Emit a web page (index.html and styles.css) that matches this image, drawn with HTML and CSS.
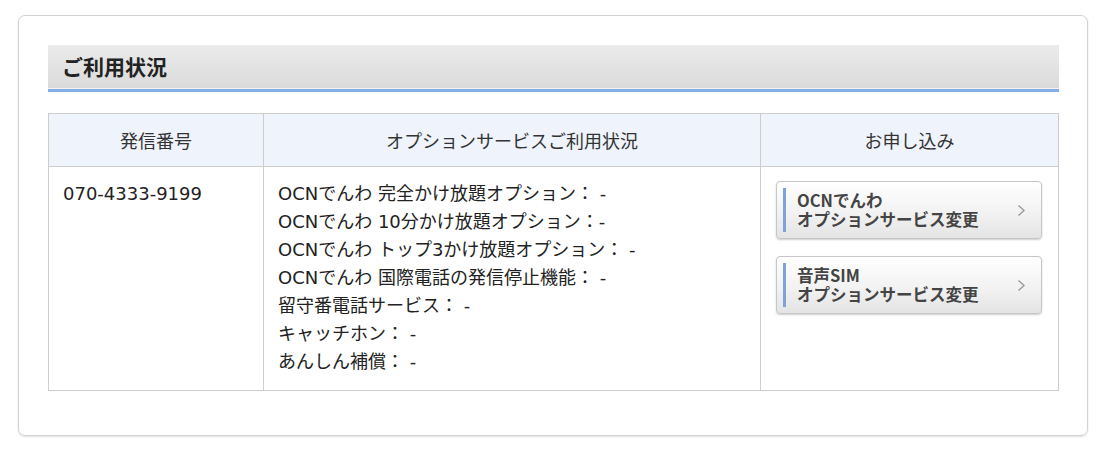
FILE: index.html
```html
<!DOCTYPE html>
<html lang="ja">
<head>
    <meta charset="UTF-8">
    <meta name="viewport" content="width=device-width, initial-scale=1.0">
    <title>ご利用状況</title>
    <link rel="stylesheet" href="styles.css">
</head>
<body>
    <div class="panel">
        <h2 class="section-title">ご利用状況</h2>

        <table class="usage-table">
            <thead>
                <tr>
                    <th class="col-number">発信番号</th>
                    <th class="col-options">オプションサービスご利用状況</th>
                    <th class="col-apply">お申し込み</th>
                </tr>
            </thead>
            <tbody>
                <tr>
                    <td>070-4333-9199</td>
                    <td>
                        <ul class="option-list">
                            <li>OCNでんわ 完全かけ放題オプション： -</li>
                            <li>OCNでんわ 10分かけ放題オプション：-</li>
                            <li>OCNでんわ トップ3かけ放題オプション： -</li>
                            <li>OCNでんわ 国際電話の発信停止機能： -</li>
                            <li>留守番電話サービス： -</li>
                            <li>キャッチホン： -</li>
                            <li>あんしん補償： -</li>
                        </ul>
                    </td>
                    <td class="apply-cell">
                        <a class="apply-btn" href="#">
                            <span class="apply-label">OCNでんわ<br>オプションサービス変更</span>
                            <svg class="chevron" width="9" height="13" viewBox="0 0 9 13"><polyline points="1.5,1.5 7,6.5 1.5,11.5" fill="none" stroke="#9a9a9a" stroke-width="1.4"/></svg>
                        </a>
                        <a class="apply-btn" href="#">
                            <span class="apply-label">音声SIM<br>オプションサービス変更</span>
                            <svg class="chevron" width="9" height="13" viewBox="0 0 9 13"><polyline points="1.5,1.5 7,6.5 1.5,11.5" fill="none" stroke="#9a9a9a" stroke-width="1.4"/></svg>
                        </a>
                    </td>
                </tr>
            </tbody>
        </table>
    </div>
</body>
</html>
```

FILE: styles.css
```css
body {
    margin: 0;
    padding: 15px 17px 14px 18px;
    background-color: #fff;
    font-family: "DejaVu Sans", "Noto Sans CJK JP", sans-serif;
    color: #222;
}
.panel {
    border: 1px solid #d2d2d2;
    border-radius: 7px;
    box-shadow: 0 1px 2px rgba(0, 0, 0, 0.12);
    padding: 29px 28px 44px 29px;
}
.section-title {
    margin: 0;
    height: 44px;
    line-height: 43px;
    padding-left: 14px;
    font-family: "Noto Sans CJK JP", sans-serif;
    font-size: 21px;
    font-weight: bold;
    color: #222;
    background: linear-gradient(#ebebeb, #dadada);
    box-shadow: inset 0 -1px 0 #f2f2f2;
    border-bottom: 3px solid #86ace6;
}
.usage-table {
    width: 100%;
    margin-top: 21px;
    border-collapse: collapse;
    table-layout: fixed;
    font-size: 18px;
}
.usage-table th,
.usage-table td {
    border: 1px solid #cdcdcd;
}
.usage-table th {
    height: 52px;
    padding: 0;
    font-weight: normal;
    color: #333;
    background-color: #eef3fc;
    text-align: center;
}
.usage-table td {
    vertical-align: top;
    padding: 13px 14px 14px 14px;
    line-height: 28px;
}
.col-number {
    width: 214px;
}
.col-options {
    width: 496px;
}
.option-list {
    list-style: none;
    margin: 0;
    padding: 0;
}
.usage-table .apply-cell {
    padding: 14px 16px 0 15px;
}
.apply-btn {
    display: flex;
    align-items: center;
    justify-content: space-between;
    height: 56px;
    margin-bottom: 17px;
    padding: 0 15px 0 6px;
    border: 1px solid #c6c6c6;
    border-radius: 4px;
    background: linear-gradient(#ffffff, #f2f2f2 55%, #e4e4e4);
    box-shadow: 0 1px 2px rgba(0, 0, 0, 0.2);
    text-decoration: none;
    color: #444;
}
.apply-label {
    border-left: 3px solid #7ea3dc;
    padding: 3px 0 3px 11px;
    font-family: "Noto Sans CJK JP", sans-serif;
    font-size: 16.5px;
    font-weight: bold;
    line-height: 19px;
}
.chevron {
    display: block;
}
```
